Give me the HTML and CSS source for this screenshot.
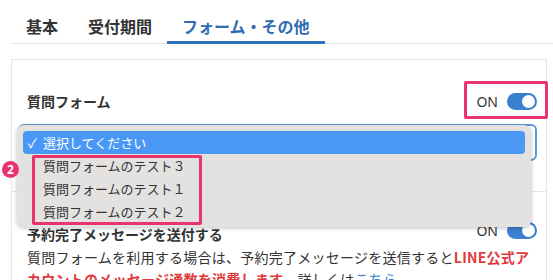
FILE: index.html
```html
<!DOCTYPE html>
<html lang="ja">
<head>
<meta charset="utf-8">
<link rel="stylesheet" href="styles.css">
</head>
<body>
<div class="tabs">
  <div class="tab">基本</div>
  <div class="tab">受付期間</div>
  <div class="tab active">フォーム・その他</div>
</div>
<div class="card">
  <div class="section first">
    <div class="row">
      <div class="label">質問フォーム</div>
      <div class="toggle">
        <span class="on">ON</span><span class="switch"><span class="knob"></span></span>
        <div class="mark mark-toggle"></div>
      </div>
    </div>
    <div class="select-wrap">
      <div class="select"></div>
      <div class="menu">
        <div class="opt selected"><span class="check">✓</span>選択してください</div>
        <div class="opt">質問フォームのテスト３</div>
        <div class="opt">質問フォームのテスト１</div>
        <div class="opt">質問フォームのテスト２</div>
        <div class="mark mark-items"></div>
        <div class="badge">2</div>
      </div>
    </div>
  </div>
  <div class="section second">
    <div class="row top">
      <div class="label">予約完了メッセージを送付する</div>
      <div class="toggle small">
        <span class="on">ON</span><span class="switch"><span class="knob"></span></span>
      </div>
    </div>
    <p class="desc">質問フォームを利用する場合は、予約完了メッセージを送信すると<strong class="warn">LINE公式アカウントのメッセージ通数を消費します</strong>。詳しくは<a class="link">こちら</a></p>
  </div>
</div>
</body>
</html>
```

FILE: styles.css
```css
* { box-sizing: border-box; }
html, body { margin: 0; padding: 0; }
body {
  width: 553px;
  height: 280px;
  overflow: hidden;
  background: #fff;
  color: #333;
  font-family: "Noto Sans CJK JP", "Noto Sans", sans-serif;
}
.tabs {
  display: flex;
  margin-left: 11px;
  border-bottom: 1px solid #e3e6ea;
}
.tab {
  padding: 14px 15px 3px;
  line-height: 24px;
  font-size: 16px;
  font-weight: 700;
  color: #333;
  border-bottom: 3px solid transparent;
  margin-bottom: -1px;
}
.tab.active {
  color: #2f6db3;
  border-bottom-color: #2f70bd;
}
.card {
  margin: 15px 6px 0 11px;
  border: 1px solid #e3e6ea;
  border-bottom: none;
  padding: 0 9px 0 15px;
}
.section.first {
  padding-top: 29px;
  padding-bottom: 30px;
  border-bottom: 1px solid #e3e6ea;
  margin: 0 -9px 0 -15px;
  padding-left: 15px;
  padding-right: 9px;
}
.row {
  display: flex;
  justify-content: space-between;
  align-items: center;
}
.label {
  font-size: 14px;
  font-weight: 700;
  line-height: 24px;
}
.toggle {
  position: relative;
  display: flex;
  align-items: center;
  gap: 9px;
  height: 24px;
}
.on {
  font-family: "Noto Sans", sans-serif;
  font-size: 14px;
  color: #333;
}
.switch {
  position: relative;
  width: 30px;
  height: 17px;
  border-radius: 9px;
  background: #3a7fd0;
}
.knob {
  position: absolute;
  right: 2px;
  top: 2px;
  width: 13px;
  height: 13px;
  border-radius: 50%;
  background: #fff;
}
.mark {
  position: absolute;
  border: 3px solid #e8336d;
  border-radius: 2px;
}
.mark-toggle {
  left: -12px;
  right: -11px;
  top: -8px;
  bottom: -6px;
}
.select-wrap {
  position: relative;
  margin: 11px 0 0 -9px;
}
.select {
  height: 37px;
  border: 2px solid #5b9ad8;
  border-radius: 6px;
}
.menu {
  position: absolute;
  left: -1px;
  top: 1px;
  width: 514px;
  padding: 6px 6px 4px;
  background: #e3e2e1;
  border-radius: 7px;
  box-shadow: 0 1px 4px rgba(0,0,0,0.25);
  z-index: 2;
}
.opt {
  height: 23px;
  line-height: 23px;
  font-size: 13px;
  color: #333;
  padding-left: 20px;
}
.opt.selected {
  background: #4a98f5;
  color: #fff;
  border-radius: 4px;
  padding-left: 5px;
}
.check {
  display: inline-block;
  width: 15px;
}
.mark-items {
  left: 15px;
  top: 30px;
  width: 170px;
  height: 70px;
}
.badge {
  position: absolute;
  left: -15px;
  top: 36px;
  width: 17px;
  height: 17px;
  border-radius: 50%;
  background: #e8336d;
  color: #fff;
  font-family: "Noto Sans", sans-serif;
  font-size: 12px;
  font-weight: 700;
  line-height: 17px;
  text-align: center;
}
.section.second {
  padding-top: 31px;
}
.row.top {
  align-items: flex-start;
}
.row.top .label {
  line-height: 23px;
}
.toggle.small {
  height: 17px;
  margin-top: -1px;
}
.desc {
  margin: 0;
  font-size: 14px;
  line-height: 22px;
  letter-spacing: 0.25px;
  color: #333;
}
.warn {
  color: #e03a3e;
  font-weight: 700;
}
.link {
  color: #3a82d0;
}
```
